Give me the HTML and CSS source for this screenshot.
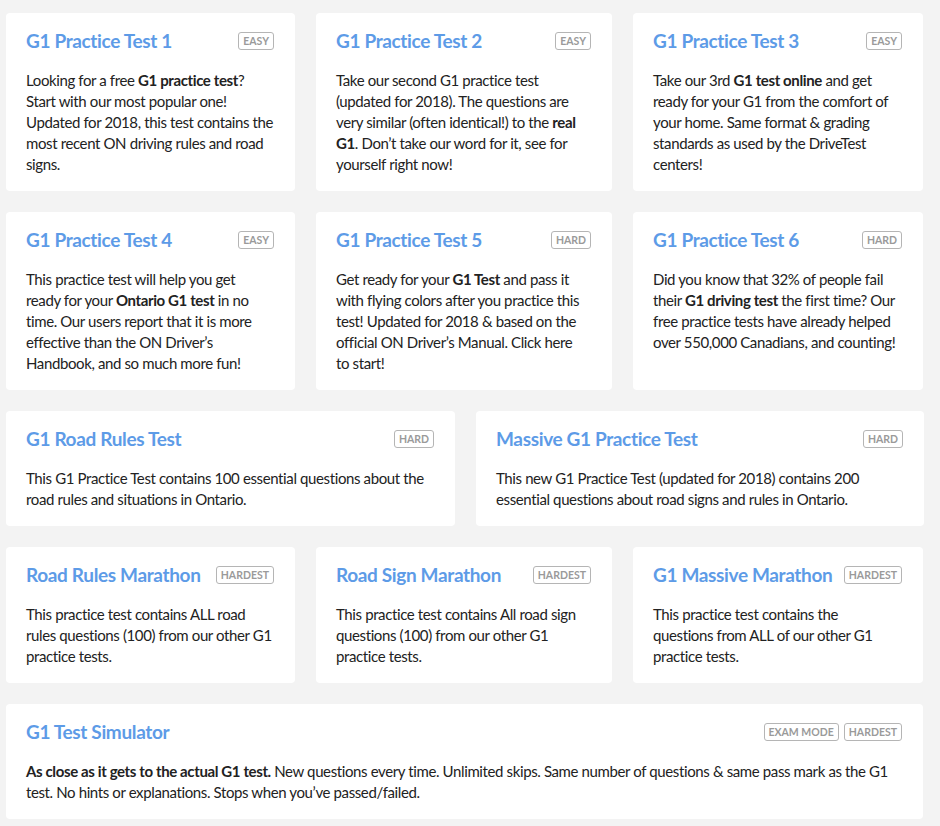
FILE: index.html
```html
<!DOCTYPE html>
<html>
<head>
<meta charset="utf-8">
<link rel="stylesheet" href="styles.css">
</head>
<body>
<div class="page">
  <div class="row row-3">
    <div class="card">
      <div class="head"><a class="title">G1 Practice Test 1</a><div class="badges"><span class="badge">EASY</span></div></div>
      <p class="desc">Looking for a free <b>G1 practice test</b>? Start with our most popular one! Updated for 2018, this test contains the most recent ON driving rules and road signs.</p>
    </div>
    <div class="card">
      <div class="head"><a class="title">G1 Practice Test 2</a><div class="badges"><span class="badge">EASY</span></div></div>
      <p class="desc">Take our second G1 practice test (updated for 2018). The questions are very similar (often identical!) to the <b>real G1</b>. Don’t take our word for it, see for yourself right now!</p>
    </div>
    <div class="card">
      <div class="head"><a class="title">G1 Practice Test 3</a><div class="badges"><span class="badge">EASY</span></div></div>
      <p class="desc">Take our 3rd <b>G1 test online</b> and get ready for your G1 from the comfort of your home. Same format &amp; grading standards as used by the DriveTest centers!</p>
    </div>
  </div>
  <div class="row row-3">
    <div class="card">
      <div class="head"><a class="title">G1 Practice Test 4</a><div class="badges"><span class="badge">EASY</span></div></div>
      <p class="desc">This practice test will help you get<br>ready for your <b>Ontario G1 test</b> in no<br>time. Our users report that it is more effective than the ON Driver’s Handbook, and so much more fun!</p>
    </div>
    <div class="card">
      <div class="head"><a class="title">G1 Practice Test 5</a><div class="badges"><span class="badge">HARD</span></div></div>
      <p class="desc">Get ready for your <b>G1 Test</b> and pass it with flying colors after you practice this test! Updated for 2018 &amp; based on the official ON Driver’s Manual. Click here<br>to start!</p>
    </div>
    <div class="card">
      <div class="head"><a class="title">G1 Practice Test 6</a><div class="badges"><span class="badge">HARD</span></div></div>
      <p class="desc">Did you know that 32% of people fail their <b>G1 driving test</b> the first time? Our free practice tests have already helped over 550,000 Canadians, and counting!</p>
    </div>
  </div>
  <div class="row row-2">
    <div class="card">
      <div class="head"><a class="title">G1 Road Rules Test</a><div class="badges"><span class="badge">HARD</span></div></div>
      <p class="desc">This G1 Practice Test contains 100 essential questions about the road rules and situations in Ontario.</p>
    </div>
    <div class="card">
      <div class="head"><a class="title">Massive G1 Practice Test</a><div class="badges"><span class="badge">HARD</span></div></div>
      <p class="desc">This new G1 Practice Test (updated for 2018) contains 200 essential questions about road signs and rules in Ontario.</p>
    </div>
  </div>
  <div class="row row-3">
    <div class="card">
      <div class="head"><a class="title">Road Rules Marathon</a><div class="badges"><span class="badge">HARDEST</span></div></div>
      <p class="desc">This practice test contains ALL road rules questions (100) from our other G1 practice tests.</p>
    </div>
    <div class="card">
      <div class="head"><a class="title">Road Sign Marathon</a><div class="badges"><span class="badge">HARDEST</span></div></div>
      <p class="desc">This practice test contains All road sign questions (100) from our other G1 practice tests.</p>
    </div>
    <div class="card">
      <div class="head"><a class="title">G1 Massive Marathon</a><div class="badges"><span class="badge">HARDEST</span></div></div>
      <p class="desc">This practice test contains the<br>questions from ALL of our other G1 practice tests.</p>
    </div>
  </div>
  <div class="row row-1">
    <div class="card">
      <div class="head"><a class="title">G1 Test Simulator</a><div class="badges"><span class="badge">EXAM MODE</span><span class="badge">HARDEST</span></div></div>
      <p class="desc"><b>As close as it gets to the actual G1 test.</b> New questions every time. Unlimited skips. Same number of questions &amp; same pass mark as the G1 test. No hints or explanations. Stops when you’ve passed/failed.</p>
    </div>
  </div>
</div>
</body>
</html>
```

FILE: styles.css
```css
html, body {
  margin: 0;
  padding: 0;
  background: #f3f3f3;
}
body {
  font-family: Lato, "Open Sans", "Liberation Sans", sans-serif;
  color: #222;
}
.page {
  width: 918px;
  padding: 13px 0 8px 6px;
  display: flex;
  flex-direction: column;
  gap: 21px;
}
.row {
  display: grid;
  column-gap: 21px;
}
.row-3 {
  grid-template-columns: 289px 296px 290px;
}
.row-2 {
  grid-template-columns: 449px 448px;
}
.row-1 {
  grid-template-columns: 917px;
}
.card {
  background: #fff;
  border-radius: 4px;
  padding: 15px 21px 16px 20px;
}
.head {
  display: flex;
  justify-content: space-between;
  align-items: center;
  height: 24px;
  margin-bottom: 18px;
}
.title {
  font-size: 19px;
  font-weight: 700;
  color: #5d9be7;
  line-height: 24px;
  letter-spacing: -0.35px;
  white-space: nowrap;
  text-decoration: none;
  padding-top: 1px;
}
.badges {
  display: flex;
  gap: 5px;
  margin-top: 1px;
}
.badge {
  font-size: 10.5px;
  font-weight: 700;
  color: #9a9a9a;
  border: 1px solid #b5b5b5;
  border-radius: 3px;
  padding: 0 4px;
  height: 16px;
  line-height: 16px;
}
.desc {
  margin: 0;
  font-size: 15px;
  line-height: 21px;
  letter-spacing: -0.38px;
}
.desc b {
  font-weight: 700;
}
```
